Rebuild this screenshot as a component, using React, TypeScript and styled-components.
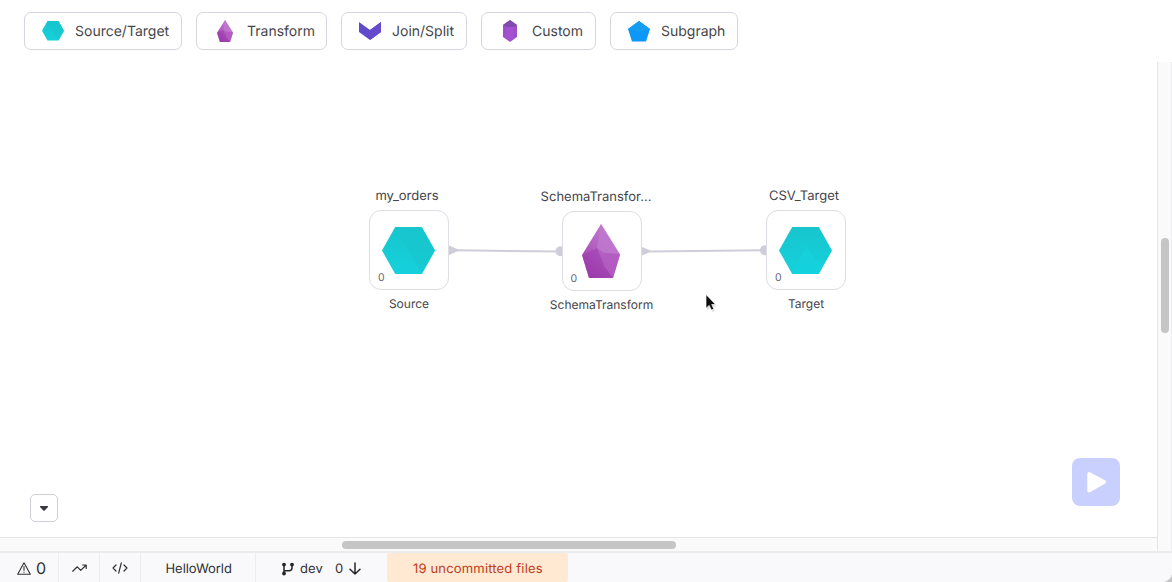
import React from "react";
import styled, { createGlobalStyle } from "styled-components";

const GlobalStyle = createGlobalStyle`
  * { box-sizing: border-box; }
  body {
    margin: 0;
    overflow: hidden;
    background: #fff;
    color: #45454a;
    font-family: Inter, "Liberation Sans", sans-serif;
    text-rendering: geometricPrecision;
  }
  button { font: inherit; color: inherit; text-rendering: inherit; }
  svg { display: block; flex: none; }
`;

const Page = styled.div`
  display: flex;
  flex-direction: column;
  width: 1172px;
  height: 582px;
  overflow: hidden;
`;

const Toolbar = styled.header`
  display: flex;
  gap: 14px;
  height: 62px;
  flex: none;
  padding: 12px 24px;
`;

const ToolButton = styled.button<{ $width: number; $spacing: number }>`
  display: flex;
  align-items: center;
  gap: 10px;
  width: ${(p) => p.$width}px;
  height: 38px;
  padding: 0 0 0 16px;
  border: 1px solid #d6d6de;
  border-radius: 7px;
  background: #fff;
  font-size: 14px;
  line-height: 20px;
  letter-spacing: ${(p) => p.$spacing}px;
  white-space: nowrap;
`;

const ToolLabel = styled.span`
  padding-top: 2px;
`;

const Editor = styled.main`
  display: grid;
  grid-template: 475px 14px / 1157px 15px;
  flex: none;
`;

const Canvas = styled.section`
  position: relative;
  background: #fff;
`;

const VerticalTrack = styled.div`
  grid-row: 1 / 3;
  grid-column: 2;
  border-left: 1px solid #e5e5e6;
  border-right: 1px solid #ececee;
  background: #fafafb;
  padding: 176px 0 0 3px;
`;

const HorizontalTrack = styled.div`
  border-top: 1px solid #e5e5e6;
  background: #fafafb;
  padding: 3px 0 0 342px;
`;

const Thumb = styled.div<{ $width: number; $height: number }>`
  width: ${(p) => p.$width}px;
  height: ${(p) => p.$height}px;
  border-radius: 4px;
  background: #c5c5c5;
`;

const Wires = styled.svg`
  position: absolute;
  left: 0;
  top: 0;
`;

const NodeGroup = styled.div<{ $x: number; $y: number }>`
  position: absolute;
  left: ${(p) => p.$x}px;
  top: ${(p) => p.$y}px;
  display: flex;
  flex-direction: column;
  align-items: center;
  width: 80px;
`;

const NodeTitle = styled.div<{ $spacing: number; $shift: number }>`
  height: 24px;
  padding-top: 1px;
  line-height: 18px;
  font-size: 13px;
  letter-spacing: ${(p) => p.$spacing}px;
  margin-left: ${(p) => p.$shift}px;
  white-space: nowrap;
`;

const NodeCard = styled.div`
  display: flex;
  align-items: center;
  justify-content: center;
  position: relative;
  width: 80px;
  height: 80px;
  flex: none;
  padding-right: 1px;
  border: 1px solid #dddde3;
  border-radius: 12px;
  background: #fff;
`;

const NodeCount = styled.span`
  position: absolute;
  left: 8px;
  bottom: 4px;
  font-size: 10.5px;
  line-height: 14px;
  color: #66666b;
`;

const NodeKind = styled.div<{ $spacing: number }>`
  margin-top: 5px;
  line-height: 18px;
  font-size: 12px;
  letter-spacing: ${(p) => p.$spacing}px;
  white-space: nowrap;
`;

const Cursor = styled.svg`
  position: absolute;
  left: 702px;
  top: 228px;
`;

const CollapseButton = styled.button`
  position: absolute;
  left: 30px;
  top: 432px;
  display: flex;
  align-items: center;
  justify-content: center;
  width: 28px;
  height: 28px;
  padding: 0;
  border: 1px solid #d0d0d6;
  border-radius: 5px;
  background: #fff;
`;

const RunButton = styled.button`
  position: absolute;
  left: 1072px;
  top: 396px;
  width: 48px;
  height: 48px;
  padding: 0;
  border: 0;
  border-radius: 8px;
  background: #c9d0fd;
`;

const StatusBar = styled.footer`
  display: flex;
  flex: none;
  height: 31px;
  border-top: 2px solid #ebebee;
  background: #f9f9fc;
  font-size: 13px;
  color: #303034;
  position: relative;
`;

const StatusItem = styled.div<{ $width: number; $pad: number; $gap?: number; $line?: boolean; $spacing?: number; $top?: number }>`
  display: flex;
  align-items: center;
  gap: ${(p) => p.$gap ?? 0}px;
  width: ${(p) => p.$width}px;
  height: 29px;
  padding: ${(p) => p.$top ?? 1}px 0 0 ${(p) => p.$pad}px;
  border-right: ${(p) => (p.$line ? "1px solid #ededf0" : "0")};
  letter-spacing: ${(p) => p.$spacing ?? 0}px;
  white-space: nowrap;
`;

const ErrorCount = styled.span`
  font-size: 16px;
`;

const Uncommitted = styled(StatusItem)`
  background: #ffe9d3;
  color: #bd3c20;
  border-radius: 2px;
`;

const BranchName = styled.span`
  margin: 0 12px 0 5px;
`;

const DownArrow = styled.svg`
  margin-left: 6px;
`;

const WindowCorner = styled.svg`
  position: absolute;
  right: 0;
  bottom: 0;
`;

const HexIcon = ({ size, flip }: { size: number; flip?: boolean }) => (
  <svg width={size} height={(size * 47) / 53} viewBox="0 0 53 47">
    <defs>
      <linearGradient id="hexFill" x1="0" y1="0" x2="0" y2="1">
        <stop offset="0" stopColor="#17c5cd" />
        <stop offset="1" stopColor="#15d1dc" />
      </linearGradient>
    </defs>
    <path d="M13.2 0H39.8L53 23.5L39.8 47H13.2L0 23.5Z" fill="url(#hexFill)" />
    {flip ? (
      <path d="M27 19L43 41L39.8 47H13.2Z" fill="#14d3de" opacity=".6" />
    ) : (
      <path d="M26.5 23.5L13.2 7L39.8 0L53 23.5L39.8 47Z" fill="#17c4cc" opacity=".55" />
    )}
  </svg>
);

const GemIcon = ({ width, height }: { width: number; height: number }) => (
  <svg width={width} height={height} viewBox="0 0 38 54" preserveAspectRatio="none">
    <defs>
      <linearGradient id="gemFill" x1=".8" y1=".1" x2=".3" y2="1">
        <stop offset="0" stopColor="#c27ad0" />
        <stop offset=".5" stopColor="#b361c2" />
        <stop offset="1" stopColor="#9b39aa" />
      </linearGradient>
    </defs>
    <path d="M19 0L38 31L31 54H7L0 31Z" fill="url(#gemFill)" />
    <path d="M19 0L38 30L22 29L15 24Z" fill="#c07acf" opacity=".75" />
    <path d="M0 31L15 24L22 42L31 54H7Z" fill="#9f3dae" opacity=".55" />
    <path d="M22 29L38 30L31 54L22 42Z" fill="#b35bc1" opacity=".8" />
  </svg>
);

const JoinIcon = () => (
  <svg width="22" height="20" viewBox="0 0 22 20">
    <path d="M0 1L11 9L22 1V11L11 19L0 11Z" fill="#5f4acb" />
    <path d="M11 9L22 1V11L11 19Z" fill="#654bcc" />
  </svg>
);

const CrystalIcon = () => (
  <svg width="14" height="22" viewBox="0 0 14 22">
    <path d="M7 0L14 5V17L7 22L0 17V5Z" fill="#a252cf" />
    <path d="M7 0L14 5L11 7H3L0 5Z" fill="#824aaf" />
    <path d="M0 5L3 7V16L0 17Z" fill="#9b4fc8" />
    <path d="M11 7L14 5V17L11 16Z" fill="#9b4fc8" />
  </svg>
);

const PentagonIcon = () => (
  <svg width="22" height="21" viewBox="0 0 22 21">
    <path d="M11 0L22 8L18 20.5H4L0 8Z" fill="#0d97f7" />
    <path d="M11 0L22 8L11 11L0 8Z" fill="#159df0" />
  </svg>
);

const IconSlot = styled.span`
  display: flex;
  align-items: center;
  justify-content: center;
  width: 24px;
  height: 24px;
  flex: none;
`;

const tools = [
  { label: "Source/Target", width: 158, spacing: 0, icon: <HexIcon size={22} /> },
  { label: "Transform", width: 131, spacing: 0, icon: <GemIcon width={16} height={22} /> },
  { label: "Join/Split", width: 126, spacing: 0, icon: <JoinIcon /> },
  { label: "Custom", width: 115, spacing: 0, icon: <CrystalIcon /> },
  { label: "Subgraph", width: 128, spacing: 0, icon: <PentagonIcon /> },
];

const nodes = [
  { x: 369, y: 124, title: "my_orders", titleSpacing: 0, shift: -4, kind: "Source", kindSpacing: 0, icon: <HexIcon size={53} /> },
  { x: 561.5, y: 125, title: "SchemaTransfor...", titleSpacing: 0, shift: -11, kind: "SchemaTransform", kindSpacing: 0, icon: <GemIcon width={38} height={54} /> },
  { x: 766, y: 124, title: "CSV_Target", titleSpacing: 0, shift: -4, kind: "Target", kindSpacing: 0, icon: <HexIcon size={53} flip /> },
];

export default function App() {
  return (
    <Page>
      <GlobalStyle />
      <Toolbar>
        {tools.map((t) => (
          <ToolButton key={t.label} $width={t.width} $spacing={t.spacing}>
            <IconSlot>{t.icon}</IconSlot>
            <ToolLabel>{t.label}</ToolLabel>
          </ToolButton>
        ))}
      </Toolbar>
      <Editor>
        <Canvas>
          <Wires width="1157" height="475" viewBox="0 0 1157 475">
            <g stroke="#cfcdd9" strokeWidth="2" fill="none">
              <path d="M456 188.2L558 189.6" />
              <path d="M649 189.4L764 188.2" />
            </g>
            <g fill="#cfcdd9">
              <path d="M449 183.5L460 188.2L449 193Z" />
              <path d="M641 184.5L652 189.3L641 194Z" />
              <circle cx="560.5" cy="189.3" r="5" />
              <circle cx="765" cy="188.3" r="5" />
            </g>
          </Wires>
          {nodes.map((n) => (
            <NodeGroup key={n.title} $x={n.x} $y={n.y}>
              <NodeTitle $spacing={n.titleSpacing} $shift={n.shift}>{n.title}</NodeTitle>
              <NodeCard>
                {n.icon}
                <NodeCount>0</NodeCount>
              </NodeCard>
              <NodeKind $spacing={n.kindSpacing}>{n.kind}</NodeKind>
            </NodeGroup>
          ))}
          <Cursor width="18" height="24" viewBox="0 0 18 24">
            <path d="M5 6.5V20.5L8 17.8L10.2 22L13 20.6L10.8 16.6H14.5Z" fill="#bbb" opacity=".45" />
            <path d="M4 4.5V18.2L7.2 15.4L9.4 20L11.8 18.9L9.7 14.5H13.6Z" fill="#0c0c0c" stroke="#fff" strokeWidth=".7" />
          </Cursor>
          <CollapseButton aria-label="Expand panel">
            <svg width="8" height="5" viewBox="0 0 8 5"><path d="M0 0H8V1L4.5 4.7H3.5L0 1Z" fill="#3c3c40" /></svg>
          </CollapseButton>
          <RunButton aria-label="Run">
            <svg width="48" height="48" viewBox="0 0 48 48">
              <path d="M17 15.7L32.5 24L17 32.7Z" fill="#fff" stroke="#fff" strokeWidth="3.4" strokeLinejoin="round" />
            </svg>
          </RunButton>
        </Canvas>
        <VerticalTrack><Thumb $width={8} $height={95} /></VerticalTrack>
        <HorizontalTrack><Thumb $width={334} $height={8} /></HorizontalTrack>
      </Editor>
      <StatusBar>
        <StatusItem $width={59} $pad={17} $gap={5} $line>
          <svg width="14" height="13" viewBox="0 0 14 13" fill="none" stroke="#303034" strokeWidth="1.1" strokeLinejoin="round" strokeLinecap="round">
            <path d="M7 .8L13.3 12.2H.7ZM7 4.5V8.3M7 10V10.2" />
          </svg>
          <ErrorCount>0</ErrorCount>
        </StatusItem>
        <StatusItem $width={41} $pad={13} $line>
          <svg width="15" height="9" viewBox="0 0 15 9" fill="none" stroke="#303034" strokeWidth="1.2" strokeLinejoin="round" strokeLinecap="round">
            <path d="M.7 7.2L5.3 2.8L8.7 6.4L14 1.2M10.7 1H14.2V4.4" />
          </svg>
        </StatusItem>
        <StatusItem $width={41} $pad={12} $line>
          <svg width="16" height="12" viewBox="0 0 16 12" fill="none" stroke="#303034" strokeWidth="1.2" strokeLinejoin="round" strokeLinecap="round">
            <path d="M4 3L1 6L4 9M12 3L15 6L12 9M9.3 .8L6.7 11.2" />
          </svg>
        </StatusItem>
        <StatusItem $width={115} $pad={24.5} $top={3} $spacing={-0.05} $line>HelloWorld</StatusItem>
        <StatusItem $width={131} $pad={25} $top={2} $spacing={0.15}>
          <svg width="14" height="14" viewBox="0 0 14 14">
            <path d="M3 3V11M3 8.7H8Q11 8.7 11 6V3" fill="none" stroke="#252528" strokeWidth="1.5" />
            <g fill="#252528"><circle cx="3" cy="2.6" r="1.9" /><circle cx="3" cy="11.5" r="1.9" /><circle cx="11" cy="2.6" r="1.9" /></g>
          </svg>
          <BranchName>dev</BranchName>
          <span>0</span>
          <DownArrow width="12" height="13" viewBox="0 0 12 13" fill="none" stroke="#252528" strokeWidth="1.5" strokeLinecap="round" strokeLinejoin="round">
            <path d="M6 1V12M1 7.2L6 12L11 7.2" />
          </DownArrow>
        </StatusItem>
        <Uncommitted $width={181} $pad={26} $top={3} $spacing={0.17}>19 uncommitted files</Uncommitted>
        <WindowCorner width="8" height="8" viewBox="0 0 8 8">
          <path d="M8 0Q7 6 0 8H8Z" fill="#c4c4c6" />
        </WindowCorner>
      </StatusBar>
    </Page>
  );
}
